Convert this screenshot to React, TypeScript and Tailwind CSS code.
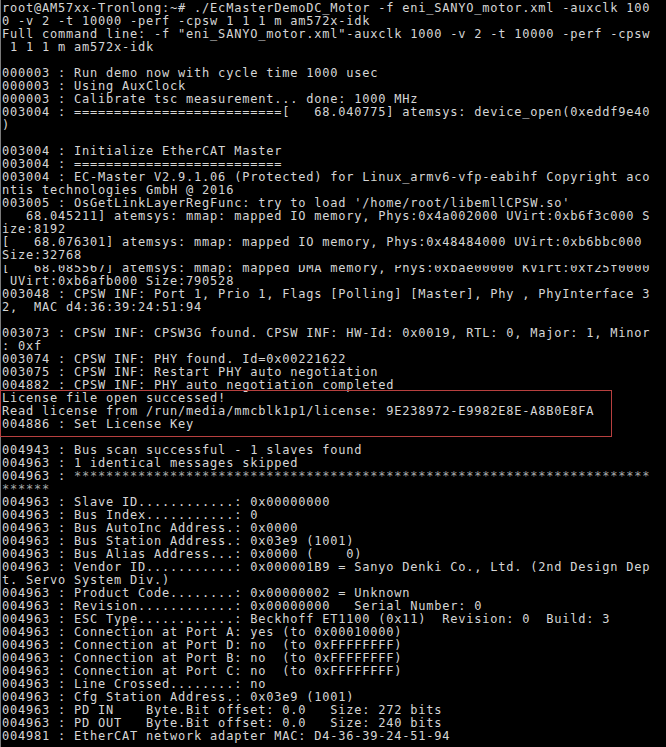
const stars = "*".repeat(72);

const lines: string[] = [
  "root@AM57xx-Tronlong:~# ./EcMasterDemoDC_Motor -f eni_SANYO_motor.xml -auxclk 100",
  "0 -v 2 -t 10000 -perf -cpsw 1 1 1 m am572x-idk",
  'Full command line: -f "eni_SANYO_motor.xml"-auxclk 1000 -v 2 -t 10000 -perf -cpsw',
  " 1 1 1 m am572x-idk",
  "",
  "000003 : Run demo now with cycle time 1000 usec",
  "000003 : Using AuxClock",
  "000003 : Calibrate tsc measurement... done: 1000 MHz",
  "003004 : " + "=".repeat(26) + "[   68.040775] atemsys: device_open(0xeddf9e40",
  ")",
  "",
  "003004 : Initialize EtherCAT Master",
  "003004 : " + "=".repeat(26),
  "003004 : EC-Master V2.9.1.06 (Protected) for Linux_armv6-vfp-eabihf Copyright aco",
  "ntis technologies GmbH @ 2016",
  "003005 : OsGetLinkLayerRegFunc: try to load '/home/root/libemllCPSW.so'",
  "   68.045211] atemsys: mmap: mapped IO memory, Phys:0x4a002000 UVirt:0xb6f3c000 S",
  "ize:8192",
  "[   68.076301] atemsys: mmap: mapped IO memory, Phys:0x48484000 UVirt:0xb6bbc000",
  "Size:32768",
  "[   68.085567] atemsys: mmap: mapped DMA memory, Phys:0xbae00000 KVirt:0xf25f0000",
  " UVirt:0xb6afb000 Size:790528",
  "003048 : CPSW INF: Port 1, Prio 1, Flags [Polling] [Master], Phy , PhyInterface 3",
  "2,  MAC d4:36:39:24:51:94",
  "",
  "003073 : CPSW INF: CPSW3G found. CPSW INF: HW-Id: 0x0019, RTL: 0, Major: 1, Minor",
  ": 0xf",
  "003074 : CPSW INF: PHY found. Id=0x00221622",
  "003075 : CPSW INF: Restart PHY auto negotiation",
  "004882 : CPSW INF: PHY auto negotiation completed",
];

const licenseLines = [
  "License file open successed!",
  "Read license from /run/media/mmcblk1p1/license: 9E238972-E9982E8E-A8B0E8FA",
  "004886 : Set License Key",
];

const tail: string[] = [
  "",
  "004943 : Bus scan successful - 1 slaves found",
  "004963 : 1 identical messages skipped",
  "004963 : " + stars,
  "******",
  "004963 : Slave ID............: 0x00000000",
  "004963 : Bus Index...........: 0",
  "004963 : Bus AutoInc Address.: 0x0000",
  "004963 : Bus Station Address.: 0x03e9 (1001)",
  "004963 : Bus Alias Address...: 0x0000 (    0)",
  "004963 : Vendor ID...........: 0x000001B9 = Sanyo Denki Co., Ltd. (2nd Design Dep",
  "t. Servo System Div.)",
  "004963 : Product Code........: 0x00000002 = Unknown",
  "004963 : Revision............: 0x00000000   Serial Number: 0",
  "004963 : ESC Type............: Beckhoff ET1100 (0x11)  Revision: 0  Build: 3",
  "004963 : Connection at Port A: yes (to 0x00010000)",
  "004963 : Connection at Port D: no  (to 0xFFFFFFFF)",
  "004963 : Connection at Port B: no  (to 0xFFFFFFFF)",
  "004963 : Connection at Port C: no  (to 0xFFFFFFFF)",
  "004963 : Line Crossed........: no",
  "004963 : Cfg Station Address.: 0x03e9 (1001)",
  "004963 : PD IN    Byte.Bit offset: 0.0   Size: 272 bits",
  "004963 : PD OUT   Byte.Bit offset: 0.0   Size: 240 bits",
  "004981 : EtherCAT network adapter MAC: D4-36-39-24-51-94",
];

// asterisks render a little dimmer in the console font
const Line = ({ text }: { text: string }) => {
  const i = text.indexOf("*");
  if (i === -1) return <div className="h-[13px] whitespace-pre">{text}</div>;
  return (
    <div className="h-[13px] whitespace-pre">
      {text.slice(0, i)}
      <span className="text-[#a8a8a8]">{text.slice(i)}</span>
    </div>
  );
};

export default function App() {
  return (
    <div className="w-[666px] h-[747px] overflow-hidden bg-black">
      <div
        className="h-full border-l border-[#7a7a7a] pl-[1px] pt-[2px] text-[12px] leading-[13px] tracking-[0.78px] text-[#d6d6d6]"
        style={{ fontFamily: '"DejaVu Sans Mono", "Liberation Mono", monospace' }}
      >
        {lines.map((t, i) =>
          i === 20 ? (
            // this row is cut at the top in the capture
            <div key={i} className="h-[13px] pt-[3px]">
              <div className="h-[10px] overflow-hidden">
                <div className="-mt-[3px] whitespace-pre">{t}</div>
              </div>
            </div>
          ) : (
            <Line key={i} text={t} />
          )
        )}

        <div className="relative -ml-[2px] -mt-[2px] -mb-[6px] w-[612px] border border-[#b8403f] pl-[1px] pt-[1px] pb-[5px]">
          {licenseLines.map((t, i) => (
            <Line key={i} text={t} />
          ))}
        </div>

        {tail.map((t, i) => (
          <Line key={i} text={t} />
        ))}
      </div>
    </div>
  );
}
